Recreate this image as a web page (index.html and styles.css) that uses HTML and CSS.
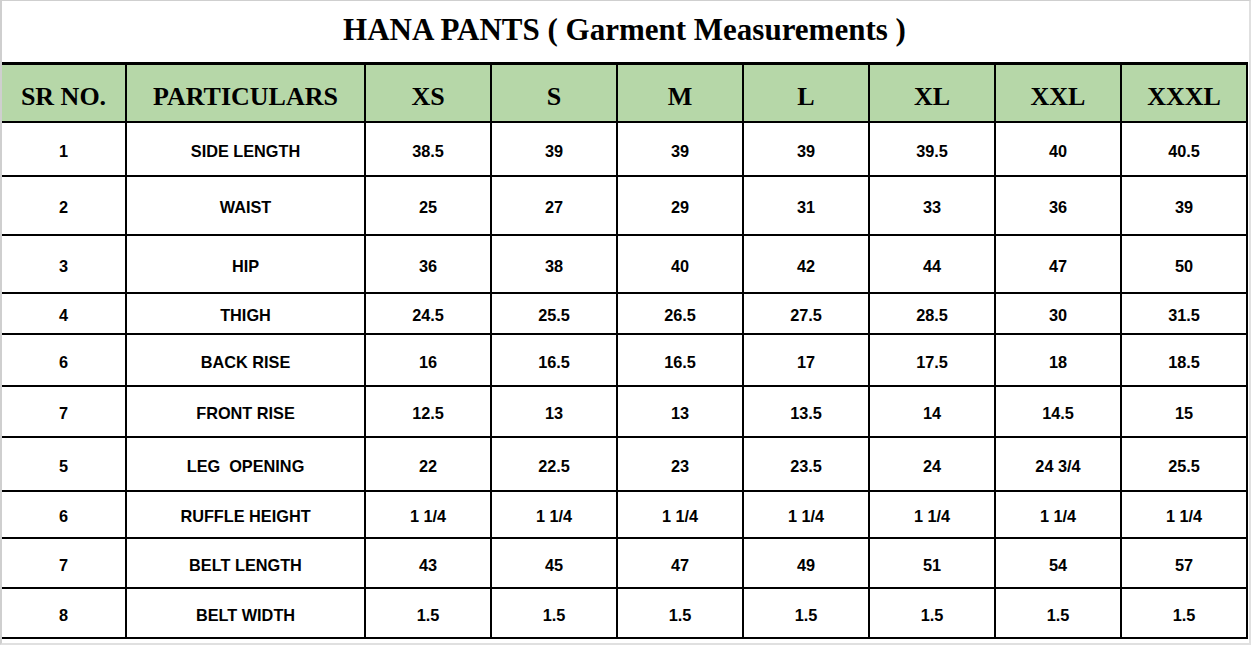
FILE: index.html
```html
<!DOCTYPE html>
<html>
<head>
<meta charset="utf-8">
<link rel="stylesheet" href="styles.css">
</head>
<body>
<div class="sheet">
  <h1 class="title">HANA PANTS ( Garment Measurements )</h1>
  <table class="grid">
    <colgroup>
      <col class="c-sr"><col class="c-part">
      <col class="c-size"><col class="c-size"><col class="c-size"><col class="c-size"><col class="c-size"><col class="c-size"><col class="c-size">
    </colgroup>
    <thead>
      <tr><th>SR NO.</th><th>PARTICULARS</th><th>XS</th><th>S</th><th>M</th><th>L</th><th>XL</th><th>XXL</th><th>XXXL</th></tr>
    </thead>
    <tbody>
      <tr><td>1</td><td>SIDE LENGTH</td><td>38.5</td><td>39</td><td>39</td><td>39</td><td>39.5</td><td>40</td><td>40.5</td></tr>
      <tr><td>2</td><td>WAIST</td><td>25</td><td>27</td><td>29</td><td>31</td><td>33</td><td>36</td><td>39</td></tr>
      <tr><td>3</td><td>HIP</td><td>36</td><td>38</td><td>40</td><td>42</td><td>44</td><td>47</td><td>50</td></tr>
      <tr><td>4</td><td>THIGH</td><td>24.5</td><td>25.5</td><td>26.5</td><td>27.5</td><td>28.5</td><td>30</td><td>31.5</td></tr>
      <tr><td>6</td><td>BACK RISE</td><td>16</td><td>16.5</td><td>16.5</td><td>17</td><td>17.5</td><td>18</td><td>18.5</td></tr>
      <tr><td>7</td><td>FRONT RISE</td><td>12.5</td><td>13</td><td>13</td><td>13.5</td><td>14</td><td>14.5</td><td>15</td></tr>
      <tr><td>5</td><td>LEG&nbsp; OPENING</td><td>22</td><td>22.5</td><td>23</td><td>23.5</td><td>24</td><td>24 3/4</td><td>25.5</td></tr>
      <tr><td>6</td><td>RUFFLE HEIGHT</td><td>1 1/4</td><td>1 1/4</td><td>1 1/4</td><td>1 1/4</td><td>1 1/4</td><td>1 1/4</td><td>1 1/4</td></tr>
      <tr><td>7</td><td>BELT LENGTH</td><td>43</td><td>45</td><td>47</td><td>49</td><td>51</td><td>54</td><td>57</td></tr>
      <tr><td>8</td><td>BELT WIDTH</td><td>1.5</td><td>1.5</td><td>1.5</td><td>1.5</td><td>1.5</td><td>1.5</td><td>1.5</td></tr>
    </tbody>
  </table>
</div>
</body>
</html>
```
FILE: styles.css
```css
html, body {
  margin: 0;
  padding: 0;
  background: #ffffff;
}

.sheet {
  box-sizing: border-box;
  width: 1251px;
  height: 645px;
  border-top: 1px solid #cfcfcf;
  border-left: 2px solid #cfcfcf;
  border-right: 2px solid #e0e0e0;
  border-bottom: 2px solid #e0e0e0;
  overflow: hidden;
}

.title {
  box-sizing: border-box;
  margin: 0;
  height: 61px;
  padding-bottom: 3px;
  display: flex;
  align-items: center;
  justify-content: center;
  font-family: "Liberation Serif", "Times New Roman", serif;
  font-weight: bold;
  font-size: 31px;
  color: #000;
  padding-right: 2px;
}

.grid {
  border-collapse: collapse;
  table-layout: fixed;
  width: 1246px;
  border-top: 3px solid #000;
}

.c-sr { width: 124px; }
.c-part { width: 239px; }
.c-size { width: 126px; }

.grid th,
.grid td {
  border: 2px solid #000;
  text-align: center;
  vertical-align: middle;
  padding: 0;
  color: #000;
  box-sizing: border-box;
}

.grid th:first-child,
.grid td:first-child {
  border-left: none;
}

.grid th {
  background: #b6d7a8;
  font-family: "Liberation Serif", "Times New Roman", serif;
  font-weight: bold;
  font-size: 26px;
  height: 58px;
  padding-top: 8px;
}

.grid td {
  font-family: "Liberation Sans", Arial, sans-serif;
  font-weight: bold;
  font-size: 16.3px;
  padding-top: 5px;
}

.grid tbody tr:nth-child(1) td { height: 54px; }
.grid tbody tr:nth-child(2) td { height: 59px; }
.grid tbody tr:nth-child(3) td { height: 58px; }
.grid tbody tr:nth-child(4) td { height: 41px; }
.grid tbody tr:nth-child(5) td { height: 52px; }
.grid tbody tr:nth-child(6) td { height: 51px; }
.grid tbody tr:nth-child(7) td { height: 54px; }
.grid tbody tr:nth-child(8) td { height: 47px; }
.grid tbody tr:nth-child(9) td { height: 50px; }
.grid tbody tr:nth-child(10) td { height: 50px; }
```
